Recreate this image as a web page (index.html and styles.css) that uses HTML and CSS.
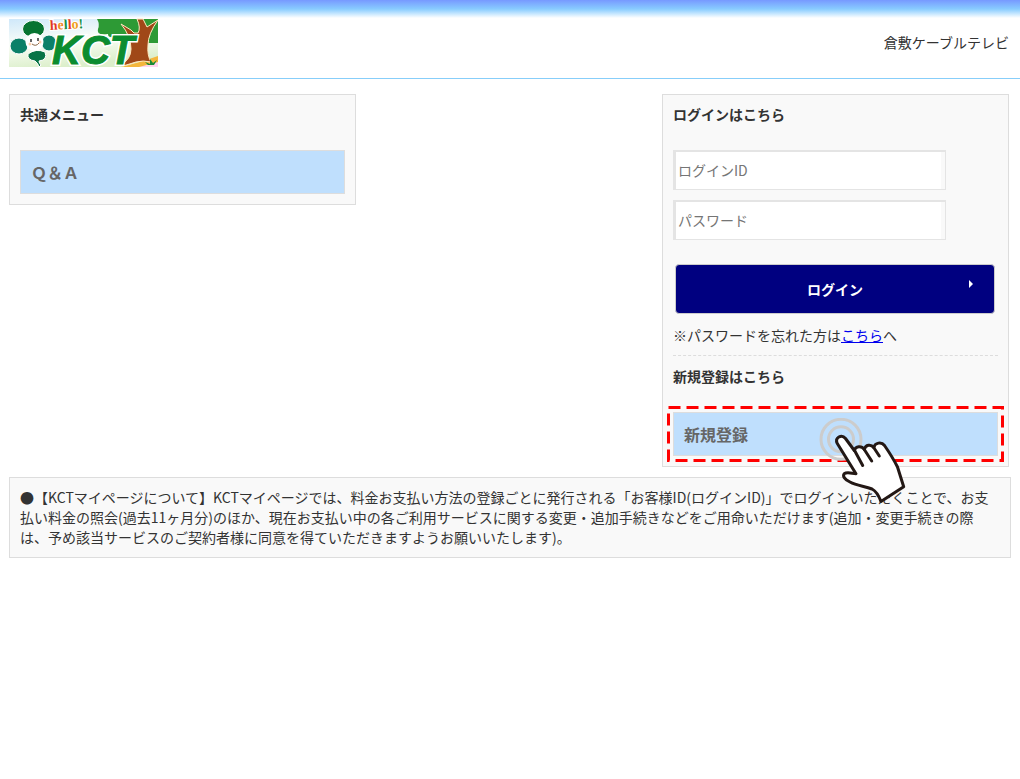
FILE: index.html
```html
<!DOCTYPE html>
<html lang="ja">
<head>
<meta charset="utf-8">
<meta name="viewport" content="width=device-width, initial-scale=1">
<title>KCTマイページ</title>
<link rel="stylesheet" href="styles.css">
</head>
<body>
<header class="header">
  <svg class="logo" viewBox="0 0 149 48" role="img" aria-label="hello! KCT">
    <defs>
      <linearGradient id="sky" x1="0" y1="0" x2="0.3" y2="1">
        <stop offset="0" stop-color="#cfe8fa"/>
        <stop offset="0.5" stop-color="#fbfef8"/>
        <stop offset="1" stop-color="#dcefcb"/>
      </linearGradient>
    </defs>
    <rect width="149" height="48" fill="url(#sky)"/>
    <path d="M88 0H149V24H121L116 18H105Q99 19 99 15Q87 17 89 10Q91 5 88 0Z" fill="#2d9a35"/>
    <path d="M112 48Q129 44 149 37V48Z" fill="#f4b63c"/>
    <path d="M130 48L149 43V48Z" fill="#ffd4ee"/>
    <path d="M112 46Q122 40 122 30Q122 17 112 5L122 11L125 14L129 14Q132 9 128 0H134L138 8L149 1Q139 15 139 26Q138 36 142 43Q134 41 127 43L114 47Z" fill="#a04818" stroke="#ffe9c0" stroke-width="1"/>
    <path d="M136 43L141 45L141 40L144 44L148 41L145 46H139Z" fill="#188c35"/>
    <g stroke="#fff" stroke-width="1">
      <ellipse cx="24.500" cy="10" rx="11" ry="8.500" fill="#087432"/>
      <ellipse cx="10" cy="27" rx="9" ry="8" fill="#0b8068"/>
      <ellipse cx="40" cy="24" rx="7.500" ry="8" fill="#0b8068"/>
      <path d="M19 35Q27 29 36 33Q39 41 30 42Q30 44 32 46L30 48Q29 44 26 42Q18 41 19 35Z" fill="#087446"/>
    </g>
    <circle cx="25.500" cy="23" r="9" fill="#fff"/>
    <path d="M22 20V23M29 19V22" stroke="#333" stroke-width="1.500"/>
    <path d="M23 25Q27 28 30 24" fill="none" stroke="#864" stroke-width="1"/>
    <circle cx="21" cy="25" r="1.500" fill="#fbd0b0"/>
    <circle cx="31" cy="23" r="1.500" fill="#fbd0b0"/>
    <text class="logo-name logo-outline" x="43" y="45">KCT</text>
    <text class="logo-name" x="43" y="45" aria-hidden="true">KCT</text>
    <text class="logo-hello" x="41" y="11" transform="rotate(-3 41 11)"><tspan fill="#e03824">h</tspan><tspan fill="#f08a28">e</tspan><tspan fill="#159045">l</tspan><tspan fill="#e03824">l</tspan><tspan fill="#f0a020">o</tspan><tspan fill="#159045">!</tspan></text>
  </svg>
  <p class="company">倉敷ケーブルテレビ</p>
</header>

<main class="page">
  <div class="columns">
    <nav class="panel" aria-labelledby="menu-title">
      <h2 class="panel-title" id="menu-title">共通メニュー</h2>
      <a class="menu-link" href="#">Ｑ＆Ａ</a>
    </nav>

    <section class="panel">
      <h2 class="panel-title">ログインはこちら</h2>
      <form class="login-form">
        <input class="field" type="text" placeholder="ログインID" aria-label="ログインID">
        <input class="field" type="password" placeholder="パスワード" aria-label="パスワード">
        <button class="login-button" type="submit">ログイン
          <svg class="arrow" viewBox="0 0 4 8" aria-hidden="true"><path d="M0 0L4 4L0 8Z"/></svg>
        </button>
      </form>
      <p class="forgot">※パスワードを忘れた方は<a href="#">こちら</a>へ</p>
      <h2 class="panel-title">新規登録はこちら</h2>
      <div class="register">
        <a class="menu-link" href="#">新規登録</a>
        <svg class="highlight" aria-hidden="true"><rect x="1.500" y="1.500"/></svg>
        <svg class="pointer" viewBox="0 0 88 86" aria-hidden="true">
          <g class="ripple"><circle cx="22" cy="21.300" r="20"/><circle cx="22" cy="21.300" r="12.500"/></g>
          <path class="hand" d="M37 55.700L18.300 25.500C15.500 20 22.500 15.500 26.500 20.500L35.300 32.500C36.500 28 42.500 27.500 45.300 31.500C46.500 26.500 52 26 54.700 29.500C56 24.500 62.500 23.500 65.500 27.500C70 34 75 42 78.500 49L84.700 68.700L62 83.500C59.500 77 57 73 53 71C46 68 38 68 31 64C25 61 23.500 58 25.300 55.700C28 53.500 33 55.500 37 55.700Z"/>
          <path class="creases" d="M35.300 32L43.700 47.500M45.300 31.500L52.700 43M54.700 29.500L60.300 38"/>
        </svg>
      </div>
    </section>
  </div>

  <section class="panel notice">
    <p>●【KCTマイページについて】KCTマイページでは、料金お支払い方法の登録ごとに発行される「お客様ID(ログインID)」でログインいただくことで、お支払い料金の照会(過去11ヶ月分)のほか、現在お支払い中の各ご利用サービスに関する変更・追加手続きなどをご用命いただけます(追加・変更手続きの際は、予め該当サービスのご契約者様に同意を得ていただきますようお願いいたします)。</p>
  </section>
</main>
</body>
</html>
```
FILE: styles.css
```css
* {
  box-sizing: border-box;
}

body {
  margin: 0;
  background: #fff;
  color: #333;
  font-family: "Noto Sans CJK JP", sans-serif;
  font-size: 14px;
  line-height: 20px;
}

h2,
p {
  margin: 0;
}

.header {
  display: flex;
  align-items: flex-start;
  justify-content: space-between;
  padding: 19px 11px 11px 9px;
  border-bottom: 1px solid #87cefa;
  background: linear-gradient(#7799ff 0, #88ccff 9px, #fff 18px);
}

.logo {
  display: block;
  width: 149px;
  height: 48px;
  overflow: visible;
}

.logo-name {
  fill: #0b8c30;
  stroke: #0b8c30;
  stroke-width: 1px;
  font-family: "Liberation Sans", sans-serif;
  font-size: 40px;
  font-style: italic;
  font-weight: bold;
}

.logo-outline {
  stroke: #fff;
  stroke-width: 4px;
}

.logo-hello {
  stroke: #fff;
  stroke-width: 2px;
  paint-order: stroke;
  font-family: "Liberation Serif", serif;
  font-size: 14px;
  font-weight: bold;
}

.company {
  padding-top: 13px;
}

.page {
  padding: 15px 9px;
}

.columns {
  display: grid;
  grid-template-columns: 347fr 306fr 347fr;
  align-items: start;
  margin-right: 2px;
}

.columns > section {
  grid-column: 3;
}

.panel {
  padding: 10px;
  border: 1px solid #ddd;
  background: #f9f9f9;
}

.panel-title {
  margin-bottom: 27px;
  font-size: 14px;
  font-weight: bold;
  line-height: 18px;
}

.menu-link {
  display: block;
  padding: 10px;
  border: 1px solid #ddd;
  background: #bfdffd;
  color: #666;
  font-size: 16px;
  font-weight: bold;
  line-height: 22px;
  text-decoration: none;
}

.login-form {
  display: flex;
  flex-direction: column;
  align-items: flex-start;
  gap: 10px;
}

.field {
  width: 84%;
  height: 40px;
  padding: 0 4px;
  border: 1px solid #e4e4e4;
  border-radius: 0;
  background: #fff;
  box-shadow: inset 2px 1px #e4e4e4, inset -4px 0 #f9f9f9;
  color: #333;
  font: inherit;
}

.field::placeholder {
  color: #757575;
}

.login-button {
  position: relative;
  align-self: stretch;
  height: 50px;
  margin: 14px 3px 0 2px;
  border: 1px solid #ccc;
  border-radius: 4px;
  background: #000080;
  color: #fff;
  font: inherit;
  font-weight: bold;
}

.arrow {
  position: absolute;
  top: 15px;
  right: 21px;
  width: 4px;
  height: 8px;
  fill: #fff;
}

.forgot {
  margin-bottom: 11px;
  padding: 11px 0 10px;
  border-bottom: 1px dashed #ddd;
}

.forgot a {
  color: #00e;
}

.register {
  position: relative;
}

.highlight {
  position: absolute;
  top: -6px;
  left: -6px;
  width: calc(100% + 12px);
  height: calc(100% + 12px);
  pointer-events: none;
}

.highlight rect {
  width: calc(100% - 3px);
  height: calc(100% - 3px);
  fill: none;
  stroke: #f00;
  stroke-width: 3px;
  stroke-dasharray: 12 6;
}

.pointer {
  position: absolute;
  top: 6px;
  left: 45%;
  width: 88px;
  height: 86px;
  pointer-events: none;
}

.ripple {
  fill: none;
  stroke: #ccc;
  stroke-width: 3px;
}

.hand {
  fill: #fff;
  stroke: #231815;
  stroke-width: 3px;
  stroke-linejoin: round;
}

.creases {
  fill: none;
  stroke: #231815;
  stroke-width: 3px;
  stroke-linecap: round;
}

.notice {
  margin-top: 10px;
  padding-top: 9px;
}
```
